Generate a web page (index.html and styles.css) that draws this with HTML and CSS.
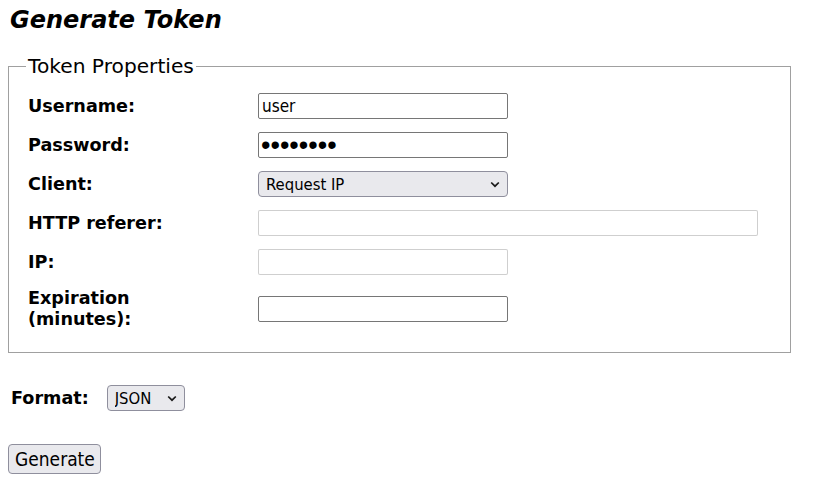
FILE: index.html
```html
<!DOCTYPE html>
<html lang="en">
<head>
<meta charset="utf-8">
<title>Generate Token</title>
<link rel="stylesheet" href="styles.css">
</head>
<body>
<div class="page">
  <h1 class="title">Generate Token</h1>
  <form class="token-form" onsubmit="return false">
    <fieldset class="props">
      <legend class="props-legend">Token Properties</legend>
      <div class="props-grid">
        <label class="lbl" for="username">Username:</label>
        <input class="field" id="username" type="text" value="user">

        <label class="lbl" for="password">Password:</label>
        <input class="field field-pass" id="password" type="password" value="password">

        <label class="lbl" for="client">Client:</label>
        <span class="select-wrap">
          <select class="select select-client" id="client">
            <option>Request IP</option>
          </select>
          <svg class="chev" width="10" height="7" viewBox="0 0 10 7"><path d="M1.2 1.5 L5 5.2 L8.8 1.5" fill="none" stroke="#1a1a1a" stroke-width="1.7"/></svg>
        </span>

        <label class="lbl" for="referer">HTTP referer:</label>
        <input class="field field-wide" id="referer" type="text" disabled>

        <label class="lbl" for="ip">IP:</label>
        <input class="field" id="ip" type="text" disabled>

        <label class="lbl" for="expiration">Expiration<br>(minutes):</label>
        <input class="field" id="expiration" type="text">
      </div>
    </fieldset>

    <div class="format-row">
      <label class="lbl" for="format">Format:</label>
      <span class="select-wrap">
        <select class="select select-format" id="format">
          <option>JSON</option>
        </select>
        <svg class="chev" width="10" height="7" viewBox="0 0 10 7"><path d="M1.2 1.5 L5 5.2 L8.8 1.5" fill="none" stroke="#1a1a1a" stroke-width="1.7"/></svg>
      </span>
    </div>

    <button class="btn" type="submit">Generate</button>
  </form>
</div>
</body>
</html>
```

FILE: styles.css
```css
* { box-sizing: border-box; }

body {
  margin: 0;
  background: #ffffff;
  color: #000000;
  font-family: "DejaVu Sans", Verdana, sans-serif;
}

.page {
  padding: 7px 8px 0 8px;
}

.title {
  margin: 0 0 21px 0;
  padding-left: 2px;
  font-size: 24px;
  line-height: 27px;
  font-weight: bold;
  font-style: italic;
}

.props {
  width: 783px;
  margin: 0;
  padding: 15px 19px 22px 19px;
  border: 1px solid #a0a0a0;
}

.props-legend {
  padding: 0 2px;
  margin-left: -2px;
  font-size: 20.2px;
  line-height: 23px;
}

.props-grid {
  display: grid;
  grid-template-columns: 230px auto;
  row-gap: 13px;
  align-items: center;
  justify-items: start;
}

.lbl {
  font-size: 17.6px;
  line-height: 21px;
  font-weight: bold;
}

.field {
  width: 250px;
  height: 26px;
  margin: 0;
  padding: 0 3px;
  border: 1px solid #767676;
  border-radius: 2px;
  background: #ffffff;
  font-family: "DejaVu Sans Condensed", "DejaVu Sans", sans-serif;
  font-stretch: condensed;
  font-size: 17px;
  color: #000000;
}

.field-pass {
  font-family: "Liberation Sans", Arial, sans-serif;
  font-stretch: normal;
  font-size: 27px;
  padding: 0 2px;
}

.field-wide {
  width: 500px;
}

.field:disabled {
  border-color: rgba(118, 118, 118, 0.35);
  background: #ffffff;
}

.select-wrap {
  position: relative;
  display: inline-block;
}

.select {
  appearance: none;
  -webkit-appearance: none;
  height: 26px;
  margin: 0;
  padding: 0 20px 0 7px;
  border: 1px solid #8f8f9d;
  border-radius: 4px;
  background: #e9e9ed;
  color: #000000;
  font-family: "DejaVu Sans Condensed", "DejaVu Sans", sans-serif;
  font-stretch: condensed;
  font-size: 16.5px;
  display: block;
}

.select-client {
  width: 250px;
}

.select-format {
  width: 78px;
}

.chev {
  position: absolute;
  right: 8px;
  top: 10px;
  pointer-events: none;
}

.format-row {
  display: flex;
  align-items: center;
  gap: 18px;
  margin-top: 32px;
  padding-left: 3px;
}

.btn {
  display: block;
  margin-top: 33px;
  width: 93px;
  height: 30px;
  padding: 0 6px;
  border: 1px solid #8f8f9d;
  border-radius: 4px;
  background: #e9e9ed;
  color: #000000;
  font-family: "DejaVu Sans Condensed", "DejaVu Sans", sans-serif;
  font-stretch: condensed;
  font-size: 19px;
}
```
